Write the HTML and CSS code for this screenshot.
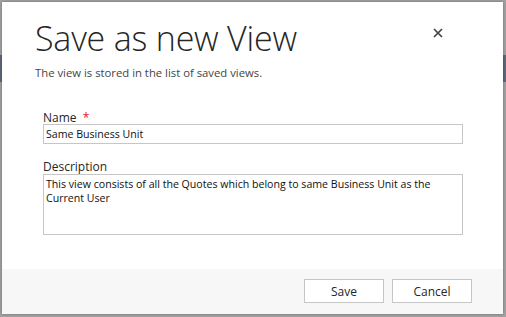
FILE: index.html
```html
<!DOCTYPE html>
<html lang="en">
<head>
  <meta charset="UTF-8">
  <title>Save as new View</title>
  <link rel="stylesheet" href="styles.css">
</head>
<body>

  <div class="backdrop">
    <div class="dialog">
      <div class="dialog-body">
        <div class="dialog-head">
          <div>
            <h1 class="dialog-title">Save as new View</h1>
            <p class="dialog-subtitle">The view is stored in the list of saved views.</p>
          </div>
          <button class="close-btn" title="Close">
            <svg width="10" height="10" viewBox="0 0 10 10">
              <path d="M1 1 L9 9 M9 1 L1 9" stroke="#444" stroke-width="1.7" />
            </svg>
          </button>
        </div>

        <div class="form">
          <label class="field-label" for="viewName">Name <span class="required">*</span></label>
          <input type="text" id="viewName" class="field-input" value="Same Business Unit" />

          <label class="field-label desc-label" for="viewDesc">Description</label>
          <textarea id="viewDesc" class="field-input field-area">This view consists of all the Quotes which belong to same Business Unit as the Current User</textarea>
        </div>
      </div>

      <div class="dialog-footer">
        <button class="btn">Save</button>
        <button class="btn">Cancel</button>
      </div>
    </div>
  </div>

</body>
</html>
```

FILE: styles.css
```css
:root {
  --text: #262626;
  --muted: #444444;
  --border: #c6c6c6;
  --footer: #f7f7f7;
  --required: #e0141e;
  --font-main: 'Segoe UI', 'Open Sans', 'Noto Sans', sans-serif;
}

body {
  margin: 0;
  font-family: var(--font-main);
  background: #a3a3a3;
  height: 100vh;
  overflow: hidden;
}

.backdrop {
  padding: 2px 3px 3px 2px;
  background: linear-gradient(to bottom, #a3a3a3 55px, #5f6a7a 55px, #5f6a7a 82px, #a3a3a3 82px);
  height: 100%;
  box-sizing: border-box;
}

.dialog {
  background: #ffffff;
  height: 312px;
  display: flex;
  flex-direction: column;
  box-shadow: 0 0 3px rgba(0, 0, 0, 0.35);
}

.dialog-body {
  flex: 1;
  padding: 0 40px 0 33px;
}

.dialog-head {
  display: flex;
  justify-content: space-between;
  align-items: flex-start;
}

.dialog-title {
  margin: 14px 0 0;
  font-size: 34px;
  font-weight: 300;
  line-height: 44px;
  color: var(--text);
  letter-spacing: -0.2px;
}

.dialog-subtitle {
  margin: 5px 0 0;
  font-size: 11.3px;
  color: var(--muted);
}

.close-btn {
  border: none;
  background: none;
  padding: 0;
  margin: 26px 20px 0 0;
  width: 10px;
  height: 10px;
  display: flex;
  cursor: pointer;
}

.form {
  display: flex;
  flex-direction: column;
  padding: 31px 0 0 8px;
}

.field-label {
  font-size: 12px;
  color: var(--text);
  line-height: 13px;
}

.desc-label {
  margin-top: 16px;
  margin-bottom: 1px;
}

.required {
  color: var(--required);
  margin-left: 3px;
}

.field-input {
  font-family: var(--font-main);
  font-size: 10.6px;
  color: #111;
  border: 1px solid var(--border);
  height: 20px;
  padding: 0 2px;
  box-sizing: border-box;
  margin: 0;
  outline: none;
}

.field-area {
  height: 61px;
  resize: none;
  line-height: 14px;
  padding: 2px 2px;
  overflow: hidden;
}

.dialog-footer {
  background: var(--footer);
  height: 45px;
  display: flex;
  justify-content: flex-end;
  align-items: flex-start;
  gap: 8px;
  padding: 10px 31px 0 0;
  box-sizing: border-box;
}

.btn {
  width: 80px;
  height: 24px;
  background: #ffffff;
  border: 1px solid var(--border);
  font-family: var(--font-main);
  font-size: 12px;
  color: var(--text);
  padding: 0;
}
```
